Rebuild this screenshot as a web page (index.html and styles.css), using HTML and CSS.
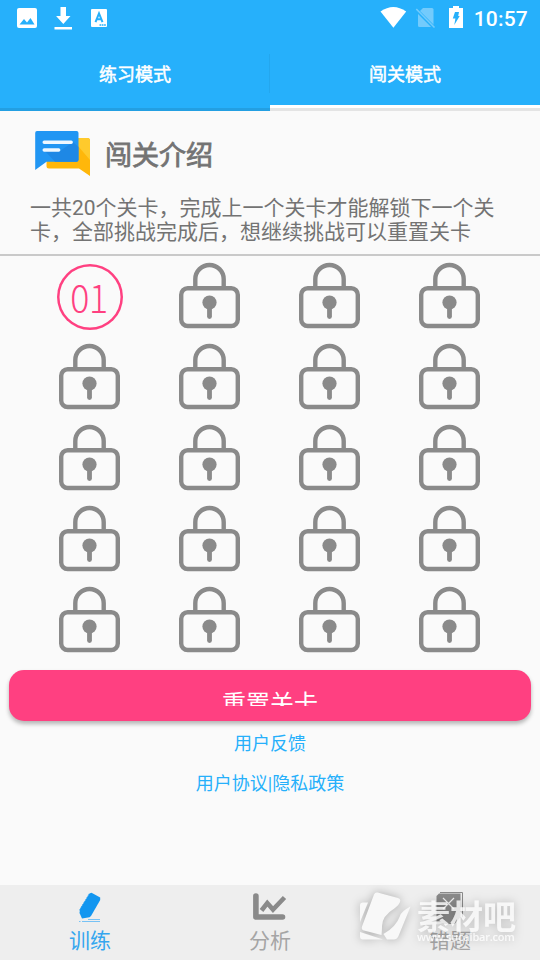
FILE: index.html
```html
<!DOCTYPE html>
<html lang="zh-CN">
<head>
<meta charset="utf-8">
<title>闯关模式</title>
<link rel="stylesheet" href="styles.css">
</head>
<body>
<svg class="defs" width="0" height="0">
  <symbol id="lock" viewBox="0 0 62 67">
    <g fill="none" stroke="#8a8a8a" stroke-width="4.4">
      <rect x="3.200" y="26.200" width="56.600" height="37.800" rx="6.5"/>
      <path d="M17.300 26V17.200a14.200 14.200 0 0 1 28.400 0V26"/>
    </g>
    <circle cx="31.500" cy="40.500" r="7.100" fill="#8a8a8a"/>
    <path d="M31.500 42v12.500" stroke="#8a8a8a" stroke-width="4.800" stroke-linecap="round"/>
  </symbol>
</svg>
<div class="screen">
  <header class="top">
    <div class="status">
      <svg width="110" height="36" viewBox="0 0 110 36">
        <rect x="17" y="8" width="20" height="20" rx="2" fill="#fff"/>
        <path d="M19.500 24.500l4.500-5.500 3 3.500 3.500-4.500 4 6.500z" fill="#26b0fb"/>
        <path d="M60.500 7h5.500v9h4.500L63.300 24l-7.200-8h4.400zM54.500 27h17.500v2.500H54.500z" fill="#fff"/>
        <rect x="91" y="9" width="16" height="18" rx="1" fill="#fff"/>
        <path d="M95.500 22.200L99 13.500l3.500 8.700M97 19.200h4" fill="none" stroke="#26b0fb" stroke-width="2"/>
        <path d="M99.500 25h6.500" stroke="#26b0fb" stroke-width="1.500" stroke-dasharray="1.700 .6"/>
      </svg>
      <div class="status-right">
        <svg width="90" height="36" viewBox="0 0 90 36">
          <path d="M.5 11.500Q13.300 2.500 26.200 11.500L13.400 27.800z" fill="#fff"/>
          <path d="M43 8h9q1.500 0 1.500 1.500V26q0 1-1 1H39.500q-1.500 0-1.500-1.500V13z" fill="#73cbfc"/>
          <path d="M36 9.500L54.500 28" stroke="#26b0fb" stroke-width="3.400"/>
          <path d="M36.300 9L54.500 27.500" stroke="#73cbfc" stroke-width="1.600"/>
          <path d="M69 8h4V6h6v2h4v20H69z" fill="#fff"/>
          <path d="M75 12h4l-.8 4h1.500L74.300 25l1.100-6.500h-2.600z" fill="#26b0fb"/>
        </svg>
        <span class="clock">10:57</span>
      </div>
    </div>
    <nav class="tabs">
      <div class="tab">练习模式</div>
      <div class="tab active">闯关模式</div>
    </nav>
  </header>

  <section class="intro">
    <div class="intro-head">
      <svg width="56" height="46" viewBox="0 0 56 46">
        <path d="M12 7h40.500q2.500 0 2.500 2.500V45L44 37.500H14q-2.500 0-2.500-2.500z" fill="#ffb70a"/>
        <path d="M43 7h9.500q2.500 0 2.500 2.500V29L43 15z" fill="#ffca2c"/>
        <path d="M2 0h39.500q2 0 2 2v26.800q0 2-2 2H11.500L.2 39V2Q.2 0 2 0z" fill="#2196f3"/>
        <path d="M38 11l5.500 5v12.800q0 2-2 2H20L10 20h15z" fill="#1e88e5"/>
        <path d="M9.200 11.200h27M9.200 19h14.500" stroke="#eff8ff" stroke-width="3.400" stroke-linecap="round"/>
      </svg>
      <h1>闯关介绍</h1>
    </div>
    <p>一共20个关卡，完成上一个关卡才能解锁下一个关<br>卡，全部挑战完成后，想继续挑战可以重置关卡</p>
  </section>

  <main class="levels">
    <div class="level open"><span>01</span></div>
    <div class="level"><svg><use href="#lock"/></svg></div>
    <div class="level"><svg><use href="#lock"/></svg></div>
    <div class="level"><svg><use href="#lock"/></svg></div>
    <div class="level"><svg><use href="#lock"/></svg></div>
    <div class="level"><svg><use href="#lock"/></svg></div>
    <div class="level"><svg><use href="#lock"/></svg></div>
    <div class="level"><svg><use href="#lock"/></svg></div>
    <div class="level"><svg><use href="#lock"/></svg></div>
    <div class="level"><svg><use href="#lock"/></svg></div>
    <div class="level"><svg><use href="#lock"/></svg></div>
    <div class="level"><svg><use href="#lock"/></svg></div>
    <div class="level"><svg><use href="#lock"/></svg></div>
    <div class="level"><svg><use href="#lock"/></svg></div>
    <div class="level"><svg><use href="#lock"/></svg></div>
    <div class="level"><svg><use href="#lock"/></svg></div>
    <div class="level"><svg><use href="#lock"/></svg></div>
    <div class="level"><svg><use href="#lock"/></svg></div>
    <div class="level"><svg><use href="#lock"/></svg></div>
    <div class="level"><svg><use href="#lock"/></svg></div>
  </main>

  <button class="reset"><span>重置关卡</span></button>
  <div class="links">
    <a>用户反馈</a>
    <a>用户协议|隐私政策</a>
  </div>

  <footer class="bottom">
    <div class="item current">
      <svg width="36" height="34" viewBox="0 0 36 34">
        <path d="M17.500 1.500l2-.7 8.700 4.700v2.500L19 24l-1.500 1.300-7.500 1.200L7.500 21l.6-4z" fill="#1296f0"/>
        <path d="M7.800 18.500L18 1.500" stroke="#1296f0" stroke-width="1.600" stroke-dasharray="1 1"/>
        <path d="M16 27.500H28M10 29.500H28M7 29.500h1.500" stroke="#77c2f5"/>
      </svg>
      <span>训练</span>
    </div>
    <div class="item">
      <svg width="36" height="34" viewBox="0 0 36 34">
        <path d="M3.900 4v21H30.500" fill="none" stroke="#8a8a8a" stroke-width="5.600" stroke-linecap="round" stroke-linejoin="round"/>
        <path d="M9.500 18.500l5.800-7.500 5.700 6.500L32.500 5.500" fill="none" stroke="#8a8a8a" stroke-width="4.600"/>
      </svg>
      <span>分析</span>
    </div>
    <div class="item">
      <svg width="36" height="34" viewBox="0 0 36 34">
        <path d="M8 .5h22.500V25" fill="none" stroke="#8a8a8a"/>
        <path d="M4.500 4L7 1.500h21.500V25l-6 7h-18z" fill="#8a8a8a"/>
        <path d="M11 6l11 11M22 6L11 17" stroke="#eee" stroke-width="1.200"/>
      </svg>
      <span>错题</span>
    </div>
    <div class="watermark">
      <svg width="53" height="50" viewBox="0 0 53 50" fill="#f8f8f8">
        <path d="M3 10.500h5L0 30V13.500q0-3 3-3zM0 40l23 7.600H3q-3 0-3-3z"/>
        <path d="M17.500 0.500L38 6q3 1 2 4-1 3-5 6-13 8-13 18 0 4-.5 9L4 38.500Q1 37.500 2 34.500L14 2.500Q15 0 17.500.5z"/>
        <path d="M50.500 14.500L38.500 44q-1.500 3.600-5 3.600H27L23.500 42Q36 35 40 24q1-4.500 10.500-9.500z"/>
      </svg>
      <div class="watermark-text"><b>素材吧</b><small>www.sucaibar.com</small></div>
    </div>
  </footer>
</div>
</body>
</html>
```
FILE: styles.css
```css
* { box-sizing: border-box; }
body {
  margin: 0;
  background: #fafafa;
  font-family: Roboto, "Noto Sans CJK SC", sans-serif;
  color: #737373;
}
.defs { position: absolute; }
svg { display: block; }
.screen {
  width: 540px;
  height: 960px;
  display: flex;
  flex-direction: column;
  overflow: hidden;
}
.top { background: #26b0fb; color: #fff; }
.status {
  height: 36px;
  display: flex;
  justify-content: space-between;
}
.status-right { display: flex; padding-right: 12px; gap: 4px; }
.clock { font-size: 21px; font-weight: 500; line-height: 39px; letter-spacing: .2px; }
.tabs { height: 75px; display: flex; }
.tab {
  flex: 1;
  border-bottom: 3px solid #239fe2;
  text-align: center;
  font-size: 18px;
  -webkit-text-stroke: .5px currentColor;
  line-height: 78px;
  height: 75px;
}
.tab:first-child {
  background: linear-gradient(#24a7ee, #24a7ee) right 18px / 1px 39px no-repeat;
}
.tab.active {
  border-bottom-color: #e4e4e4;
  box-shadow: inset 0 -3px #fff;
}
.intro {
  height: 145px;
  padding-top: 20px;
  border-bottom: 2px solid #c9c9c9;
}
.intro-head {
  display: flex;
  gap: 14px;
  padding-left: 35px;
  height: 65px;
}
.intro h1 {
  margin: 0;
  font-size: 27px;
  line-height: 50px;
  font-weight: 400;
  -webkit-text-stroke: .8px currentColor;
}
.intro p {
  margin: 0 0 0 30px;
  font-size: 21px;
  line-height: 24px;
  white-space: nowrap;
}
.levels {
  display: grid;
  grid-template-columns: repeat(4, 120px);
  grid-auto-rows: 81px;
  padding-left: 29px;
  height: 414px;
}
.level { padding-top: 6px; }
.level svg { width: 62px; height: 67px; margin: 0 auto; }
.level.open {
  width: 66px;
  height: 66px;
  margin: 7.500px 0 0 27.500px;
  padding: 0;
  border-radius: 50%;
  box-shadow: inset 0 0 0 2.500px #ff4081;
  color: #ff4081;
  font: 300 38px/65px "Noto Sans CJK SC", sans-serif;
  letter-spacing: -.5px;
  text-align: center;
}
.level.open span { display: block; transform: translateX(-1px) scaleX(.94); }
.reset {
  flex: none;
  height: 51px;
  margin: 0 9px;
  padding: 15px 0;
  border: 0;
  border-radius: 15px;
  background: #ff4081;
  box-shadow: 0 3px 4px rgba(0, 0, 0, .28);
  color: #fff;
  font: 24px Roboto, "Noto Sans CJK SC", sans-serif;
}
.reset span { display: block; height: 21px; line-height: 38px; overflow: hidden; }
.links {
  flex: 1;
  padding-top: 3px;
  text-align: center;
  color: #26b0fb;
  font-size: 18px;
  line-height: 40px;
}
.links a { display: block; }
.bottom {
  position: relative;
  display: flex;
  height: 75px;
  background: #eee;
}
.item {
  flex: 1;
  display: flex;
  flex-direction: column;
  align-items: center;
  padding-top: 7px;
  color: #a5a5a5;
  font-size: 21px;
  line-height: 30px;
}
.item svg { flex: none; }
.item.current { color: #35a6ee; }
.watermark {
  position: absolute;
  left: 360px;
  top: 7px;
  display: flex;
  gap: 4px;
  color: rgba(255, 255, 255, .8);
  filter: drop-shadow(0 0 5px rgba(0, 0, 0, .28));
}
.watermark b { display: block; font-size: 33px; line-height: 52px; height: 37px; }
.watermark small {
  display: block;
  font: 600 11px/15px "Open Sans", sans-serif;
  letter-spacing: -.2px;
  white-space: nowrap;
}
```
